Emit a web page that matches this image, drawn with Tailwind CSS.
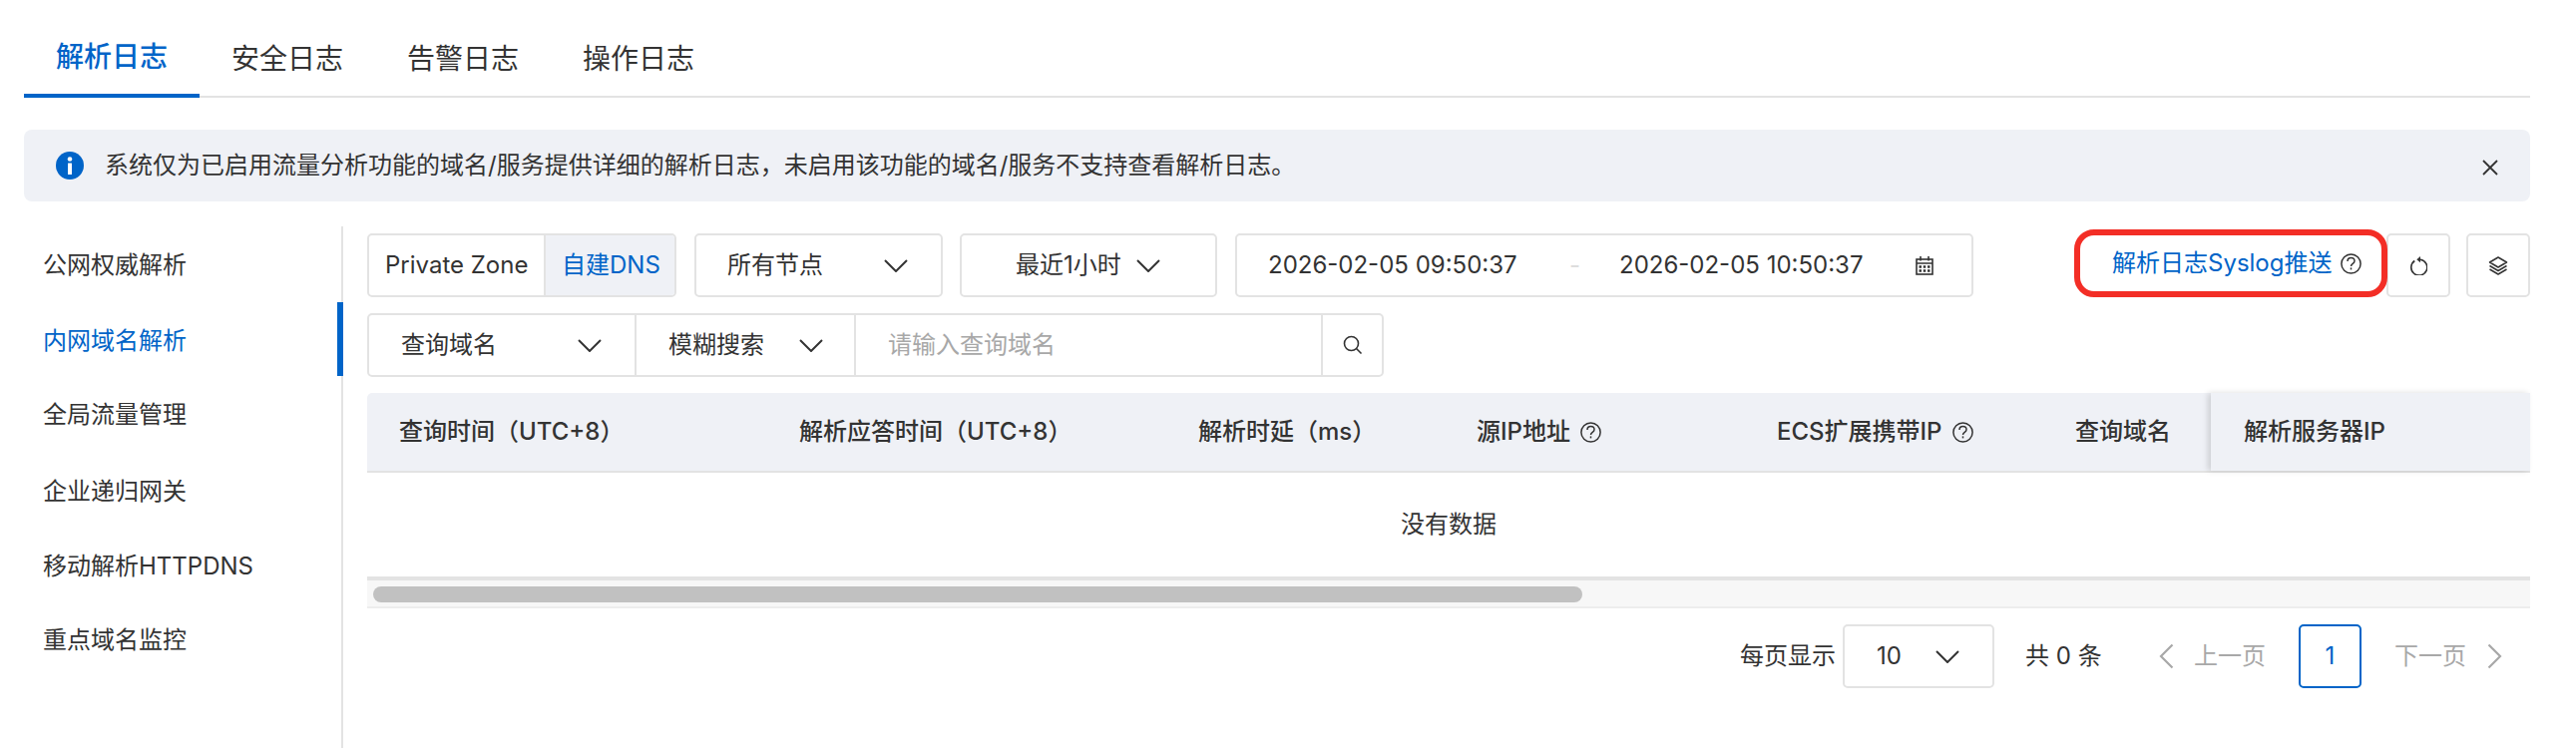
<!DOCTYPE html>
<html lang="zh-CN">

<head>
    <meta charset="UTF-8" />
    <title>解析日志</title>
    <script src="https://cdn.jsdelivr.net/npm/@tailwindcss/browser@4"></script>
</head>

<body class="bg-white text-[#333] text-[24px] font-['Inter','Noto_Sans_CJK_SC',sans-serif]">
    <div class="w-[2582px] h-[750px] overflow-hidden pl-[24px] pr-[46px]">

        <!-- tabs -->
        <div class="flex h-[98px] border-b-2 border-[#e3e3e3] text-[28px]">
            <div class="w-[176px] h-[98px] pt-[20px] flex items-center justify-center text-[#0064c8] font-medium border-b-4 border-[#0064c8]">解析日志</div>
            <div class="w-[176px] h-[98px] pt-[20px] flex items-center justify-center">安全日志</div>
            <div class="w-[176px] h-[98px] pt-[20px] flex items-center justify-center">告警日志</div>
            <div class="w-[176px] h-[98px] pt-[20px] flex items-center justify-center">操作日志</div>
        </div>

        <!-- notice -->
        <div class="mt-[32px] h-[72px] rounded-[8px] bg-[#eff1f6] flex items-center pl-[32px] pr-[31px]">
            <svg class="w-[28px] h-[28px] shrink-0" viewBox="0 0 28 28">
                <circle cx="14" cy="14" r="14" fill="#0064c8" />
                <circle cx="14" cy="7.500" r="2.300" fill="#fff" />
                <rect x="12" y="11.500" width="4" height="11.500" rx="0.500" fill="#fff" />
            </svg>
            <span class="ml-[21px] flex-1">系统仅为已启用流量分析功能的域名/服务提供详细的解析日志，未启用该功能的域名/服务不支持查看解析日志。</span>
            <svg class="w-[18px] h-[18px] mt-[4px]" viewBox="0 0 18 18" fill="none" stroke="#333" stroke-width="1.800">
                <path d="M2 2l14 14M16 2L2 16" />
            </svg>
        </div>

        <div class="flex mt-[25px] h-[523px]">
            <!-- side nav -->
            <div class="w-[320px] shrink-0 border-r-2 border-[#e3e3e3] pt-[2px] pl-[19px]">
                <div class="h-[74px] flex items-center">公网权威解析</div>
                <div class="h-[74px] pt-[3px] flex items-center -ml-[19px] pl-[19px] -mr-[2px] border-r-[6px] border-[#0064c8] text-[#0064c8]">内网域名解析</div>
                <div class="h-[78px] flex items-center">全局流量管理</div>
                <div class="h-[75px] flex items-center">企业递归网关</div>
                <div class="h-[75px] flex items-center">移动解析HTTPDNS</div>
                <div class="h-[75px] flex items-center -mt-[1px]">重点域名监控</div>
            </div>

            <!-- main -->
            <div class="w-[2192px] pl-[24px] pt-[7px]">
                <!-- toolbar first row -->
                <div class="flex h-[64px] items-center">
                    <div class="flex w-[310px] h-[64px] border-2 border-[#e3e3e3] rounded-[5px] overflow-hidden">
                        <div class="w-[175px] flex items-center pl-[16px]">Private Zone</div>
                        <div class="flex-1 flex items-center pl-[16px] bg-[#eff1f6] border-l-2 border-[#e3e3e3] text-[#0064c8]">自建DNS</div>
                    </div>
                    <div class="ml-[18px] w-[249px] h-[64px] border-2 border-[#e3e3e3] rounded-[5px] flex items-center justify-between pl-[31px] pr-[33px]">
                        所有节点
                        <svg class="w-[24px] h-[13px]" viewBox="0 0 24 13" fill="none" stroke="#333" stroke-width="2"><path d="M1 1l11 11L23 1" /></svg>
                    </div>
                    <div class="ml-[17px] w-[258px] h-[64px] border-2 border-[#e3e3e3] rounded-[5px] flex items-center justify-between pl-[54px] pr-[55px]">
                        最近1小时
                        <svg class="w-[24px] h-[13px]" viewBox="0 0 24 13" fill="none" stroke="#333" stroke-width="2"><path d="M1 1l11 11L23 1" /></svg>
                    </div>
                    <div class="ml-[18px] w-[740px] h-[64px] border-2 border-[#e3e3e3] rounded-[5px] flex items-center pl-[31px]">
                        <span class="w-[252px] whitespace-nowrap">2026-02-05 09:50:37</span>
                        <span class="w-[100px] pl-[50px] text-[#ddd]">-</span>
                        <span class="w-[248px] whitespace-nowrap">2026-02-05 10:50:37</span>
                        <svg class="w-[18px] h-[19px] ml-[49px]" viewBox="0 0 18 19" fill="none" stroke="#333" stroke-width="1.600">
                            <rect x="1" y="3" width="16" height="15" />
                            <path d="M5 0v4.500M13 0v4.500M1 7h16" />
                            <path d="M3.500 10.500h2.500M7.750 10.500h2.500M12 10.500h2.500M3.500 14.500h2.500M7.750 14.500h2.500M12 14.500h2.500" stroke-width="2.400" />
                        </svg>
                    </div>
                    <div class="relative ml-[101px] w-[314px] h-[68px] border-[6px] border-[#f32e26] rounded-[20px] flex items-center pl-[32px] -mt-[4px] text-[#0064c8] whitespace-nowrap">
                        解析日志Syslog推送
                        <svg class="absolute left-[261px] top-[18px] w-[21px] h-[21px]" viewBox="0 0 21 21" fill="none" stroke="#333" stroke-width="1.500">
                            <circle cx="10.500" cy="10.500" r="9.600" />
                            <path d="M7 8c0-2.100 1.500-3.400 3.500-3.400s3.500 1.300 3.500 3.100c0 2.700-3.500 2.500-3.500 5.300" />
                            <path d="M10.500 14.400v2" />
                        </svg>
                    </div>
                    <div class="w-[64px] h-[64px] border-2 border-[#e3e3e3] rounded-[5px] flex items-center justify-center shrink-0 -ml-px">
                        <svg class="w-[18px] h-[19px] mt-[1px]" viewBox="0 0 18 19" fill="none" stroke="#333" stroke-width="1.600">
                            <path d="M5.300 4.500A8 8 0 1 0 11 3.200" />
                            <path d="M11 0L7.300 3.200 11 6.200z" fill="#333" stroke="none" />
                        </svg>
                    </div>
                    <div class="ml-[16px] w-[64px] h-[64px] border-2 border-[#e3e3e3] rounded-[5px] flex items-center justify-center shrink-0">
                        <svg class="w-[20px] h-[19px]" viewBox="0 0 20 19" fill="none" stroke="#333" stroke-width="1.500" stroke-linejoin="round">
                            <path d="M10 1l8.500 5-8.500 5-8.500-5z" />
                            <path d="M1.500 9.500l8.500 5 8.500-5" />
                            <path d="M1.500 13l8.500 5 8.500-5" />
                        </svg>
                    </div>
                </div>

                <!-- toolbar second row -->
                <div class="mt-[16px] flex w-[1019px] h-[64px] border-2 border-[#e3e3e3] rounded-[5px]">
                    <div class="w-[268px] flex items-center justify-between pl-[32px] pr-[33px] border-r-2 border-[#e3e3e3]">
                        查询域名
                        <svg class="w-[24px] h-[13px]" viewBox="0 0 24 13" fill="none" stroke="#333" stroke-width="2"><path d="M1 1l11 11L23 1" /></svg>
                    </div>
                    <div class="w-[220px] flex items-center justify-between pl-[32px] pr-[31px] border-r-2 border-[#e3e3e3]">
                        模糊搜索
                        <svg class="w-[24px] h-[13px]" viewBox="0 0 24 13" fill="none" stroke="#333" stroke-width="2"><path d="M1 1l11 11L23 1" /></svg>
                    </div>
                    <div class="w-[468px] flex items-center pl-[32px] border-r-2 border-[#e3e3e3] text-[#a8a8a8]">请输入查询域名</div>
                    <div class="flex-1 flex items-center justify-center">
                        <svg class="w-[20px] h-[20px]" viewBox="0 0 20 20" fill="none" stroke="#333" stroke-width="1.600">
                            <circle cx="8.500" cy="8.500" r="7" />
                            <path d="M13.500 13.500L18.500 18.500" />
                        </svg>
                    </div>
                </div>

                <!-- table -->
                <div class="mt-[16px] w-[2168px]">
                    <div class="flex h-[80px] bg-[#eff1f6] border-b-2 border-[#e3e3e3] rounded-t-[5px] font-medium whitespace-nowrap">
                        <div class="w-[401px] pl-[32px] flex items-center">查询时间（UTC+8）</div>
                        <div class="w-[400px] pl-[32px] flex items-center">解析应答时间（UTC+8）</div>
                        <div class="w-[279px] pl-[32px] flex items-center">解析时延（ms）</div>
                        <div class="w-[301px] pl-[32px] flex items-center">
                            源IP地址
                            <svg class="w-[21px] h-[21px] ml-[10px]" viewBox="0 0 21 21" fill="none" stroke="#333" stroke-width="1.500">
                                <circle cx="10.500" cy="10.500" r="9.600" />
                                <path d="M7 8c0-2.100 1.500-3.400 3.500-3.400s3.500 1.300 3.500 3.100c0 2.700-3.500 2.500-3.500 5.300" />
                                <path d="M10.500 14.400v2" />
                            </svg>
                        </div>
                        <div class="w-[299px] pl-[32px] flex items-center">
                            ECS扩展携带IP
                            <svg class="w-[21px] h-[21px] ml-[10px]" viewBox="0 0 21 21" fill="none" stroke="#333" stroke-width="1.500">
                                <circle cx="10.500" cy="10.500" r="9.600" />
                                <path d="M7 8c0-2.100 1.500-3.400 3.500-3.400s3.500 1.300 3.500 3.100c0 2.700-3.500 2.500-3.500 5.300" />
                                <path d="M10.500 14.400v2" />
                            </svg>
                        </div>
                        <div class="w-[168px] pl-[32px] flex items-center">查询域名</div>
                        <div class="w-[320px] pl-[33px] flex items-center bg-[#eff1f6] shadow-[-3px_0_6px_rgba(0,0,0,0.14)]">解析服务器IP</div>
                    </div>
                    <div class="h-[104px] flex items-center justify-center">没有数据</div>
                    <div class="h-[32px] bg-[#f7f7f7] border-t-4 border-b-2 border-t-[#e3e3e3] border-b-[#ededed] pt-[6px] pl-[6px]">
                        <div class="w-[1212px] h-[16px] rounded-full bg-[#c1c1c1]"></div>
                    </div>
                </div>

                <!-- pagination -->
                <div class="mt-[16px] w-[2168px] h-[64px] flex items-center pl-[1376px]">
                    <span class="w-[103px] whitespace-nowrap">每页显示</span>
                    <div class="w-[152px] h-[64px] border-2 border-[#e3e3e3] rounded-[5px] flex items-center justify-between pl-[32px] pr-[33px]">
                        10
                        <svg class="w-[24px] h-[13px]" viewBox="0 0 24 13" fill="none" stroke="#333" stroke-width="2"><path d="M1 1l11 11L23 1" /></svg>
                    </div>
                    <span class="ml-[31px] w-[134px] whitespace-nowrap">共 0 条</span>
                    <svg class="w-[15px] h-[26px]" viewBox="0 0 15 26" fill="none" stroke="#a8a8a8" stroke-width="2.200"><path d="M13.500 1.500L2 13l11.500 11.500" /></svg>
                    <span class="ml-[20px] text-[#a8a8a8]">上一页</span>
                    <div class="ml-[33px] w-[63px] h-[64px] border-2 border-[#0064c8] rounded-[5px] flex items-center justify-center text-[#0064c8]">1</div>
                    <span class="ml-[33px] text-[#a8a8a8]">下一页</span>
                    <svg class="ml-[21px] w-[15px] h-[26px]" viewBox="0 0 15 26" fill="none" stroke="#a8a8a8" stroke-width="2.200"><path d="M1.500 1.500L13 13 1.500 24.500" /></svg>
                </div>
            </div>
        </div>
    </div>
</body>

</html>
